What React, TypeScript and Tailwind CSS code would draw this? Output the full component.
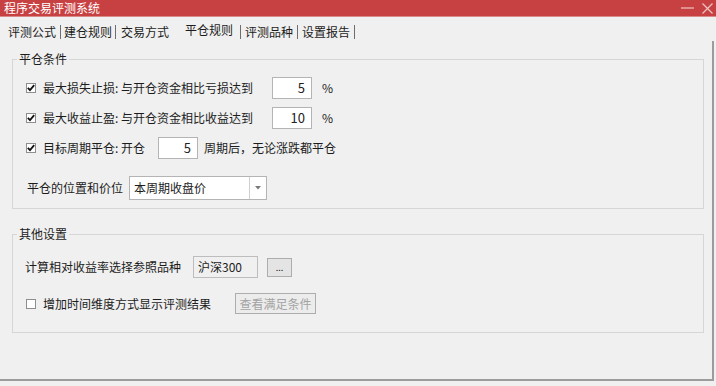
import React from "react";

const font = { fontFamily: '"Noto Sans CJK SC", "Noto Sans", sans-serif' };

function Check({ checked }: { checked: boolean }) {
  return (
    <span className="w-[10px] h-[10px] border border-[#8e8e8e] bg-white flex items-center justify-center shrink-0">
      {checked && (
        <svg width="8" height="8" viewBox="0 0 8 8">
          <path d="M0.8 3.8 L3 6.2 L7.2 1.2" fill="none" stroke="#111" strokeWidth="1.8" />
        </svg>
      )}
    </span>
  );
}

function NumBox({ v, w = "w-[40px]" }: { v: string; w?: string }) {
  return (
    <div className={`${w} h-[22px] border border-[#b4b4b4] bg-white flex items-center justify-end pr-[6px] text-[13px] leading-[16px] text-[#222]`}>
      {v}
    </div>
  );
}

function Sep() {
  return <span className="w-[1px] h-[14px] mt-[1px] bg-[#6e6e6e] shrink-0" />;
}

export default function App() {
  return (
    <div className="w-[716px] h-[386px] bg-[#f0f0f0] flex flex-col overflow-hidden text-[12px] leading-[16px] text-[#1c1c1c]" style={font}>
      {/* title bar */}
      <div className="h-[17px] bg-[#c84142] flex items-center justify-between pl-[4px] pr-[3px] border-b border-[#d98a8a]">
        <span className="text-white text-[12px] leading-[14px]">程序交易评测系统</span>
        <div className="flex items-center gap-[8px]">
          <svg width="13" height="10" viewBox="0 0 13 10">
            <path d="M0 5 H13" stroke="#f0c4c4" strokeWidth="1.2" />
          </svg>
          <svg width="11" height="11" viewBox="0 0 11 11">
            <path d="M0.5 0.5 L10.5 10.5 M10.5 0.5 L0.5 10.5" stroke="#f0c4c4" strokeWidth="1.2" />
          </svg>
        </div>
      </div>

      {/* tabs */}
      <div className="h-[24px] flex items-start pl-[8px] pt-[7px]">
        <span className="w-[48px]">评测公式</span>
        <span className="w-[4px]" />
        <Sep />
        <span className="w-[3px]" />
        <span className="w-[48px]">建仓规则</span>
        <span className="w-[3px]" />
        <Sep />
        <span className="w-[5px]" />
        <span className="w-[48px]">交易方式</span>
        <span className="w-[16px]" />
        <span className="w-[48px] -mt-[2px]">平仓规则</span>
        <span className="w-[7px]" />
        <Sep />
        <span className="w-[4px]" />
        <span className="w-[48px]">评测品种</span>
        <span className="w-[4px]" />
        <Sep />
        <span className="w-[4px]" />
        <span className="w-[48px]">设置报告</span>
        <span className="w-[4px]" />
        <Sep />
      </div>

      {/* panel */}
      <div className="w-[714px] h-[340px] border-r-2 border-b-2 border-[#9c9c9c] pt-[10px]">
        <fieldset className="ml-[12px] w-[692px] border border-[#d6d6d6]">
          <legend className="ml-[4px] px-[2px] leading-[16px]">平仓条件</legend>
          <div className="pt-[10px] pb-[8px] pl-[13px] flex flex-col">
            <div className="h-[22px] flex items-center">
              <Check checked />
              <span className="ml-[7px] w-[229px]">最大损失止损: 与开仓资金相比亏损达到</span>
              <NumBox v="5" />
              <span className="ml-[10px]">%</span>
            </div>
            <div className="h-[22px] mt-[8px] flex items-center">
              <Check checked />
              <span className="ml-[7px] w-[229px]">最大收益止盈: 与开仓资金相比收益达到</span>
              <NumBox v="10" />
              <span className="ml-[10px]">%</span>
            </div>
            <div className="h-[22px] mt-[8px] flex items-center">
              <Check checked />
              <span className="ml-[7px] w-[115px]">目标周期平仓: 开仓</span>
              <NumBox v="5" />
              <span className="ml-[6px]">周期后，无论涨跌都平仓</span>
            </div>
            <div className="h-[24px] mt-[17px] flex items-center">
              <span className="ml-[1px] w-[102px]">平仓的位置和价位</span>
              <div className="w-[138px] h-[24px] border border-[#b4b4b4] bg-white flex items-stretch">
                <span className="flex-1 flex items-center pl-[4px]">本周期收盘价</span>
                <span className="w-[17px] border-l border-[#cfcfcf] flex items-center justify-center">
                  <svg width="6" height="4" viewBox="0 0 6 4">
                    <path d="M0 0 H6 L3 3.5 Z" fill="#7a7a7a" />
                  </svg>
                </span>
              </div>
            </div>
          </div>
        </fieldset>

        <fieldset className="mt-[17px] ml-[12px] w-[692px] border border-[#d6d6d6]">
          <legend className="ml-[4px] px-[2px] leading-[16px]">其他设置</legend>
          <div className="pt-[14px] pb-[18px] pl-[12px] flex flex-col">
            <div className="h-[22px] flex items-center">
              <span className="w-[168px]">计算相对收益率选择参照品种</span>
              <div className="w-[65px] h-[22px] border border-[#bdbdbd] bg-[#f0f0f0] flex items-center pl-[4px] text-[12px]">
                沪深300
              </div>
              <div className="ml-[9px] w-[25px] h-[19px] border border-[#adadad] bg-[#e4e4e4] flex items-end justify-center pb-[4px]">
                <span className="text-[9px] leading-[8px]">...</span>
              </div>
            </div>
            <div className="h-[21px] mt-[15px] flex items-center">
              <span className="ml-[1px]"><Check checked={false} /></span>
              <span className="ml-[7px] w-[192px]">增加时间维度方式显示评测结果</span>
              <div className="w-[81px] h-[21px] border border-[#adadad] bg-[#ececec] flex items-center justify-center text-[#a3a3a3]">
                查看满足条件
              </div>
            </div>
          </div>
        </fieldset>
      </div>
    </div>
  );
}
